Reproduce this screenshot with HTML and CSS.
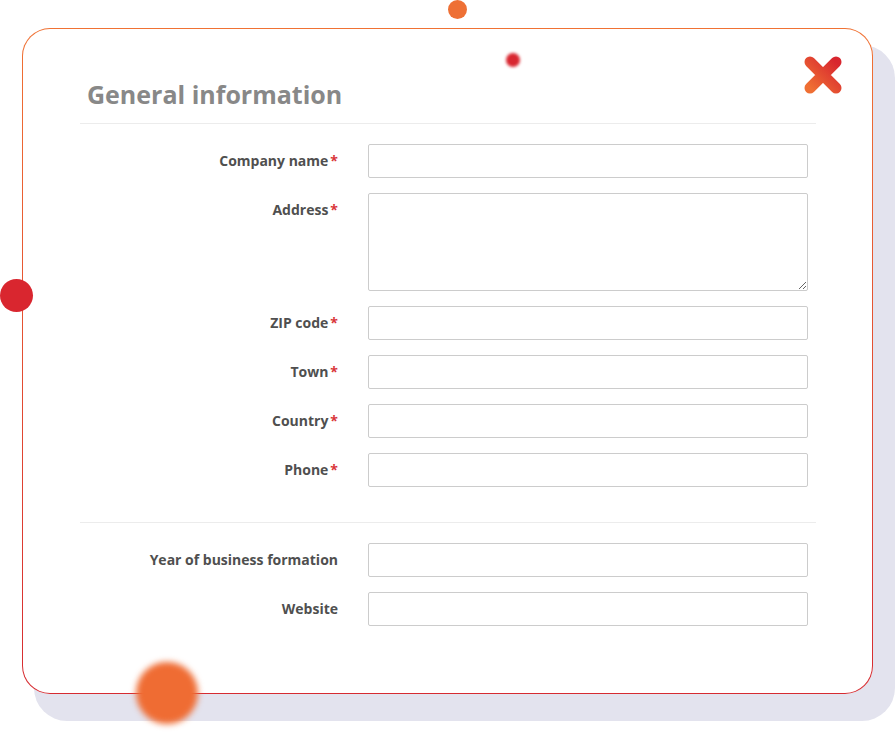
FILE: index.html
```html
<!DOCTYPE html>
<html lang="en">
<head>
<meta charset="utf-8">
<title>General information</title>
<link rel="stylesheet" href="styles.css">
</head>
<body>
<div class="stage">
  <div class="card">
    <button class="close" aria-label="Close">
      <svg width="40" height="40" viewBox="0 0 40 40">
        <defs>
          <linearGradient id="xg" x1="0" y1="1" x2="1" y2="0">
            <stop offset="0" stop-color="#ef6f33"/>
            <stop offset="1" stop-color="#d8262f"/>
          </linearGradient>
        </defs>
        <path d="M7 7 L33 33 M33 7 L7 33" stroke="url(#xg)" stroke-width="11" stroke-linecap="round" fill="none"/>
      </svg>
    </button>
    <h1 class="title">General information</h1>
    <div class="divider"></div>
    <form class="form">
      <div class="grid">
        <label class="label">Company name<span class="req">*</span></label>
        <input class="field" type="text">
        <label class="label">Address<span class="req">*</span></label>
        <textarea class="field area"></textarea>
        <label class="label">ZIP code<span class="req">*</span></label>
        <input class="field" type="text">
        <label class="label">Town<span class="req">*</span></label>
        <input class="field" type="text">
        <label class="label">Country<span class="req">*</span></label>
        <input class="field" type="text">
        <label class="label">Phone<span class="req">*</span></label>
        <input class="field" type="text">
      </div>
      <div class="divider mid"></div>
      <div class="grid">
        <label class="label">Year of business formation</label>
        <input class="field" type="text">
        <label class="label">Website</label>
        <input class="field" type="text">
      </div>
    </form>
  </div>
  <span class="dot dot-top"></span>
  <span class="dot dot-blur"></span>
  <span class="dot dot-left"></span>
  <span class="dot dot-blob"></span>
</div>
</body>
</html>
```
FILE: styles.css
```css
html, body {
  margin: 0;
  padding: 0;
  background: #fff;
  font-family: "Open Sans", "Liberation Sans", sans-serif;
}
.stage {
  position: relative;
  width: 895px;
  height: 736px;
  overflow: hidden;
  padding-top: 28px;
  padding-left: 22px;
  box-sizing: border-box;
}
.card {
  position: relative;
  width: 851px;
  height: 666px;
  box-sizing: border-box;
  border: 1px solid transparent;
  border-radius: 28px;
  background:
    linear-gradient(#fff, #fff) padding-box,
    linear-gradient(180deg, #f07234 0%, #d62b31 100%) border-box;
  box-shadow: 17px 22px 0 5px #e3e3ee;
  padding: 47px 56px 0 57px;
}
.close {
  position: absolute;
  top: 26px;
  right: 29px;
  width: 40px;
  height: 40px;
  padding: 0;
  border: 0;
  background: none;
  cursor: pointer;
}
.close svg { display: block; }
.title {
  margin: 0 0 11px 7px;
  font-size: 25px;
  line-height: 36px;
  font-weight: 700;
  color: #888;
}
.divider {
  height: 1px;
  background: #ececec;
}
.divider.mid { margin: 35px 0 0; }
.form { margin: 0; }
.grid {
  display: grid;
  grid-template-columns: 258px 440px;
  column-gap: 30px;
  row-gap: 15px;
  margin-top: 20px;
}
.label {
  text-align: right;
  font-size: 14px;
  line-height: 20px;
  font-weight: 700;
  color: #4f4f4f;
  padding-top: 7px;
}
.req {
  color: #d9363b;
  margin-left: 2px;
}
.field {
  display: block;
  width: 440px;
  height: 34px;
  box-sizing: border-box;
  border: 1px solid #cccccc;
  border-radius: 2px;
  background: #fff;
  margin: 0;
  font: inherit;
  font-size: 14px;
}
.area {
  height: 98px;
  resize: vertical;
}
.dot {
  position: absolute;
  border-radius: 50%;
  display: block;
}
.dot-top {
  left: 448px;
  top: 0;
  width: 19px;
  height: 19px;
  background: #ee7035;
}
.dot-blur {
  left: 506px;
  top: 53px;
  width: 14px;
  height: 14px;
  background: #d8262f;
  filter: blur(1.5px);
}
.dot-left {
  left: 0;
  top: 279px;
  width: 33px;
  height: 33px;
  background: #d9262f;
}
.dot-blob {
  left: 136px;
  top: 662px;
  width: 62px;
  height: 62px;
  background: #ef6c33;
  filter: blur(3px);
}
```
